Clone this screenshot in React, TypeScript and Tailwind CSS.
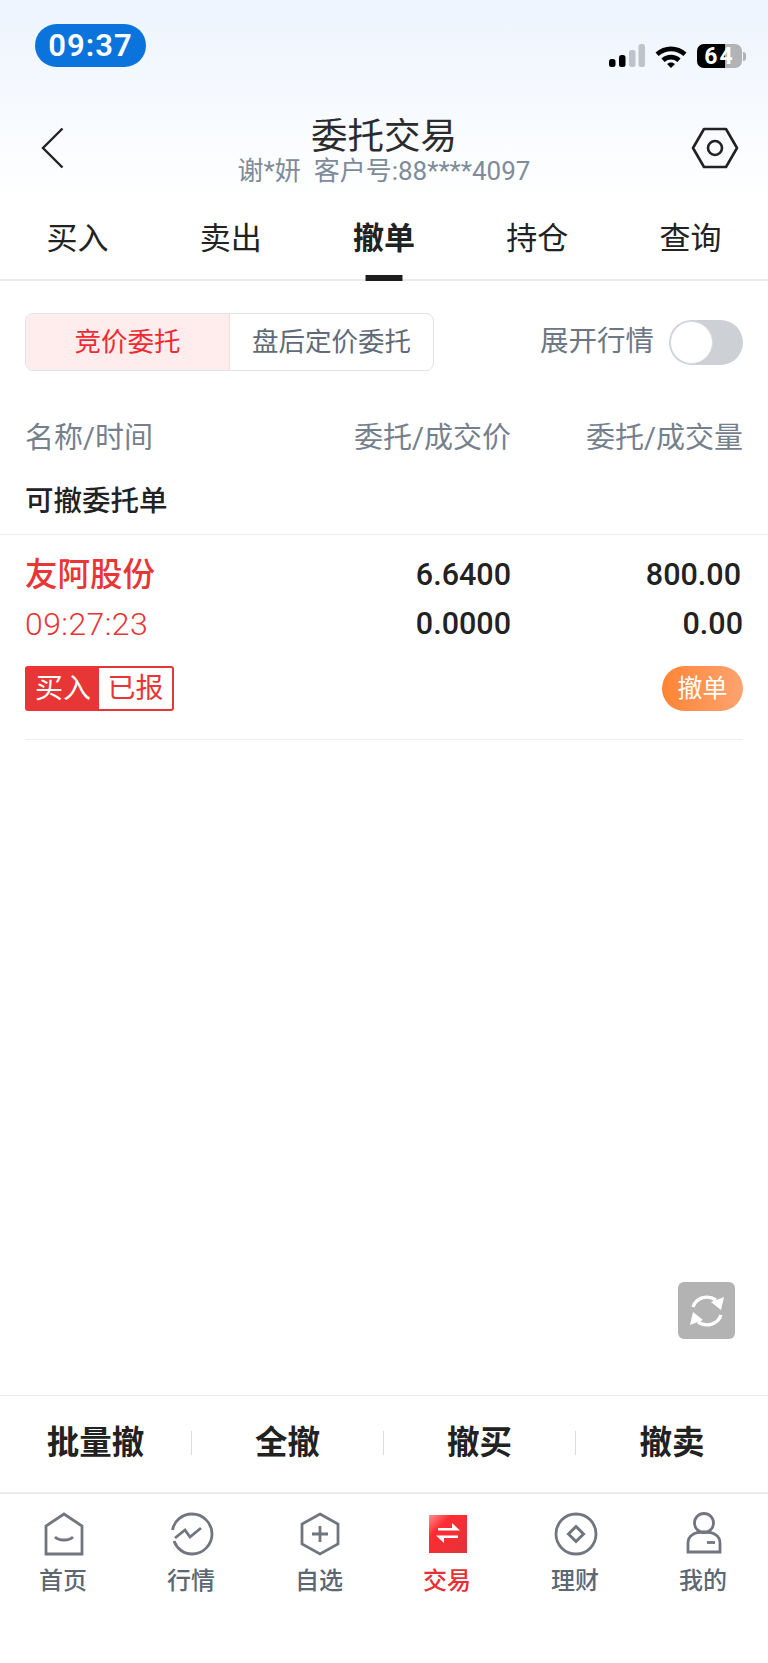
import React from "react";

const FONT = "font-['Roboto','Noto_Sans_CJK_SC',sans-serif]";

function SignalBars() {
  return (
    <svg width="36" height="24" viewBox="0 0 36 24">
      <rect x="0" y="15" width="6.5" height="8" rx="2.5" fill="#000" />
      <rect x="10" y="11" width="6.5" height="12" rx="2.5" fill="#000" />
      <rect x="20" y="6" width="6.5" height="17" rx="2.5" fill="#bfc3c9" />
      <rect x="29.5" y="0" width="6.5" height="23" rx="2.5" fill="#bfc3c9" />
    </svg>
  );
}

function Wifi() {
  return (
    <svg width="32" height="24" viewBox="0 0 32 24">
      <path d="M0.5 8.5C9 0.5 23 0.5 31.5 8.5L28.4 11.9C21.5 5.6 10.5 5.6 3.6 11.9Z" fill="#000" />
      <path d="M6.4 14.6C11.8 9.6 20.2 9.6 25.6 14.6L22.4 18C18.8 14.7 13.2 14.7 9.6 18Z" fill="#000" />
      <path d="M12 20C14.3 17.9 17.7 17.9 20 20L16 24Z" fill="#000" />
    </svg>
  );
}

function Battery() {
  return (
    <div className="flex items-center">
      <div className="relative w-[45px] h-[24px] rounded-[7px] bg-[#b2b3b6] flex items-center justify-center">
        <div className="absolute left-0 top-0 bottom-0 w-[28px] rounded-l-[7px] bg-black" />
        <span className="relative text-white text-[23px] font-bold leading-none tracking-[2px]">64</span>
      </div>
      <div className="w-[3px] h-[9px] rounded-r-full bg-[#b2b3b6] ml-[1px]" />
    </div>
  );
}

function BackChevron() {
  return (
    <svg width="24" height="42" viewBox="0 0 24 42" fill="none">
      <path d="M21.5 1.5L2 21L21.5 40.5" stroke="#222" strokeWidth="2.4" />
    </svg>
  );
}

function SettingsHex() {
  return (
    <svg width="48" height="42" viewBox="0 0 48 42" fill="none">
      <path d="M13 2H35L46 21L35 40H13L2 21Z" stroke="#222" strokeWidth="2.6" strokeLinejoin="round" />
      <circle cx="24" cy="21" r="7" stroke="#222" strokeWidth="2.6" />
    </svg>
  );
}

function RefreshGlyph() {
  return (
    <svg width="38" height="36" viewBox="0 0 38 36" fill="none">
      <path d="M5 14C8 5 19 1 28 7" stroke="#fff" strokeWidth="3.4" />
      <path d="M36 4L33 17L23 9Z" fill="#fff" />
      <path d="M33 22C30 31 19 35 10 29" stroke="#fff" strokeWidth="3.4" />
      <path d="M2 32L5 19L15 27Z" fill="#fff" />
    </svg>
  );
}

function HomeIcon() {
  return (
    <svg width="40" height="44" viewBox="0 0 40 44" fill="none">
      <path d="M2 42V14L20 2L38 14V42Z" stroke="#71757f" strokeWidth="2.8" />
      <path d="M11 25C15 29 25 29 29 25" stroke="#71757f" strokeWidth="2.8" />
    </svg>
  );
}

function MarketIcon() {
  return (
    <svg width="44" height="44" viewBox="0 0 44 44" fill="none">
      <path d="M2.6 18C4 9 12 2 22 2C33 2 42 11 42 22C42 33 33 42 22 42C14 42 7 37 4 29" stroke="#71757f" strokeWidth="2.8" />
      <path d="M5 26L15 18L20 25L31 16" stroke="#71757f" strokeWidth="2.8" />
    </svg>
  );
}

function WatchIcon() {
  return (
    <svg width="40" height="44" viewBox="0 0 40 44" fill="none">
      <path d="M20 2L38 12V32L20 42L2 32V12Z" stroke="#71757f" strokeWidth="2.8" />
      <path d="M20 14V30M12 22H28" stroke="#71757f" strokeWidth="2.8" />
    </svg>
  );
}

function TradeIcon() {
  return (
    <svg width="40" height="44" viewBox="0 0 40 44">
      <defs>
        <linearGradient id="tradeFill" x1="0" y1="0" x2="1" y2="1">
          <stop offset="0" stopColor="#ff8f92" />
          <stop offset="0.3" stopColor="#ff2c32" />
          <stop offset="1" stopColor="#e0343a" />
        </linearGradient>
      </defs>
      <rect x="1" y="3" width="38" height="38" fill="url(#tradeFill)" />
      <path d="M10 16H24V11L32 18.5H10Z" fill="#fff" />
      <path d="M30 26H16V31L8 23.5H30Z" fill="#fff" />
    </svg>
  );
}

function WealthIcon() {
  return (
    <svg width="44" height="44" viewBox="0 0 44 44" fill="none">
      <circle cx="22" cy="22" r="20" stroke="#71757f" strokeWidth="2.8" />
      <path d="M22 14.5L29.5 22L22 29.5L14.5 22Z" stroke="#71757f" strokeWidth="3" />
    </svg>
  );
}

function ProfileIcon() {
  return (
    <svg width="36" height="44" viewBox="0 0 36 44" fill="none">
      <circle cx="18" cy="11" r="9.5" stroke="#71757f" strokeWidth="2.8" />
      <path d="M2 40V31C2 24 8 20 18 20C28 20 34 24 34 31V40Z" stroke="#71757f" strokeWidth="2.8" />
      <path d="M21 30.5H29" stroke="#71757f" strokeWidth="2.8" />
    </svg>
  );
}

const topTabs = ["买入", "卖出", "撤单", "持仓", "查询"];
const batchActions = ["批量撤", "全撤", "撤买", "撤卖"];
const navItems = [
  { label: "首页", icon: <HomeIcon /> },
  { label: "行情", icon: <MarketIcon /> },
  { label: "自选", icon: <WatchIcon /> },
  { label: "交易", icon: <TradeIcon />, active: true },
  { label: "理财", icon: <WealthIcon /> },
  { label: "我的", icon: <ProfileIcon /> },
];

export default function App() {
  return (
    <div className={`${FONT} w-[768px] h-[1663px] flex flex-col bg-white overflow-hidden`}>
      {/* status bar and title share the tinted top wash */}
      <div className="bg-gradient-to-b from-[#edf4fe] to-white h-[200px] flex flex-col">
        <div className="h-[112px] flex justify-between pl-[35px] pr-[22px] pt-[24px]">
          <div className="w-[111px] h-[43px] rounded-[22px] bg-[#0b74dc] text-white flex items-center justify-center text-[31px] font-semibold leading-none tracking-[1px]">
            09:37
          </div>
          <div className="flex items-start gap-[10px] pt-[20px]">
            <SignalBars />
            <Wifi />
            <Battery />
          </div>
        </div>
        <div className="h-[88px] grid grid-cols-[1fr_auto_1fr] items-start px-[29px] pt-[15px]">
          <div className="pl-[12px]">
            <BackChevron />
          </div>
          <div className="flex flex-col items-center -mt-[12px]">
            <div className="text-[36.5px] leading-[43px] text-[#2b2b2b]">委托交易</div>
            <div className="text-[26px] leading-[28px] text-[#7f8b99] whitespace-pre -mt-[1px]">谢*妍  客户号:88****4097</div>
          </div>
          <div className="flex justify-end">
            <SettingsHex />
          </div>
        </div>
      </div>

      {/* order-type tabs */}
      <div className="h-[81px] border-b-2 border-[#ebebeb] grid grid-cols-5 px-[1px]">
        {topTabs.map((tab) => (
          <div key={tab} className="relative flex justify-center pt-[17px]">
            <span className={`text-[31px] leading-[44px] text-[#222] ${tab === "撤单" ? "font-bold" : ""}`}>{tab}</span>
            {tab === "撤单" && <div className="absolute left-[50%] -translate-x-1/2 bottom-[-2px] w-[37px] h-[6px] bg-[#1c1c1c]" />}
          </div>
        ))}
      </div>

      {/* session switch and quote toggle */}
      <div className="flex items-center justify-between pl-[25px] pr-[25px] pt-[32px]">
        <div className="flex w-[409px] h-[58px] rounded-[8px] border border-[#dfe2e6] overflow-hidden text-[26.5px]">
          <div className="w-[204px] bg-[#ffecec] text-[#ee2b33] flex items-center justify-center border-r border-[#fbdcdc]">竞价委托</div>
          <div className="flex-1 text-[#5f6b78] flex items-center justify-center">盘后定价委托</div>
        </div>
        <div className="flex items-center gap-[15px]">
          <span className="text-[28.5px] text-[#6d7784]">展开行情</span>
          <div className="w-[74px] h-[45px] rounded-full bg-[#cdd0d5] flex items-center">
            <div className="w-[43px] h-[43px] ml-[1px] rounded-full bg-white border border-[#d7dade]" />
          </div>
        </div>
      </div>

      {/* column headings */}
      <div className="flex items-center pl-[25px] pr-[25px] pt-[45px] text-[29px] leading-[44px] text-[#76808c]">
        <span className="flex-1">名称/时间</span>
        <span className="w-[160px] text-right whitespace-nowrap">委托/成交价</span>
        <span className="w-[232px] text-right whitespace-nowrap">委托/成交量</span>
      </div>

      <div className="pl-[25px] pt-[20px] pb-[10px] text-[28.5px] leading-[44px] font-medium text-[#222] border-b border-[#eeeeee]">
        可撤委托单
      </div>

      {/* cancellable order */}
      <div className="mx-[25px] pt-[17px] pb-[28px] border-b border-[#eeeeee]">
        <div className="flex items-center h-[46px]">
          <span className="flex-1 text-[32.5px] font-medium text-[#e83535]">友阿股份</span>
          <span className="w-[160px] text-right text-[30.5px] font-medium text-[#222]">6.6400</span>
          <span className="w-[232px] pr-[2px] text-right text-[30.5px] font-medium text-[#222]">800.00</span>
        </div>
        <div className="flex items-center h-[46px] mt-[3px]">
          <span className="flex-1 text-[32px] font-light tracking-[0.4px] text-[#e83535]">09:27:23</span>
          <span className="w-[160px] text-right text-[30.5px] font-medium text-[#222]">0.0000</span>
          <span className="w-[232px] text-right text-[30.5px] font-medium text-[#222]">0.00</span>
        </div>
        <div className="flex items-center justify-between mt-[19px]">
          <div className="flex w-[149px] h-[45px] rounded-[3px] border-2 border-[#e83535] text-[28px] leading-none">
            <span className="w-[72px] bg-[#e83535] text-white flex items-center justify-center">买入</span>
            <span className="flex-1 text-[#e83535] flex items-center justify-center">已报</span>
          </div>
          <div className="w-[81px] h-[45px] rounded-full bg-gradient-to-r from-[#ff8430] to-[#ffa36f] text-white text-[25px] flex items-center justify-center">
            撤单
          </div>
        </div>
      </div>

      {/* floating refresh sits at the end of the empty list */}
      <div className="flex-1 flex items-end justify-end pr-[33px] pb-[56px]">
        <div className="w-[57px] h-[57px] rounded-[6px] bg-[#b3b3b3] flex items-center justify-center">
          <RefreshGlyph />
        </div>
      </div>

      {/* batch cancel bar */}
      <div className="h-[99px] border-t border-b-2 border-[#ececec] grid grid-cols-4 items-center pb-[2px]">
        {batchActions.map((action, i) => (
          <div key={action} className={`h-[24px] flex items-center justify-center text-[32.5px] font-semibold text-[#222] ${i < 3 ? "border-r border-[#dddddd]" : ""}`}>
            {action}
          </div>
        ))}
      </div>

      {/* bottom navigation */}
      <div className="h-[169px] grid grid-cols-6 items-start pt-[18px]">
        {navItems.map((item) => (
          <div key={item.label} className="flex flex-col items-center">
            {item.icon}
            <span className={`mt-[10px] mr-[2px] text-[24px] leading-[30px] font-medium ${item.active ? "text-[#ea2e36]" : "text-[#5c6774]"}`}>
              {item.label}
            </span>
          </div>
        ))}
      </div>
    </div>
  );
}
